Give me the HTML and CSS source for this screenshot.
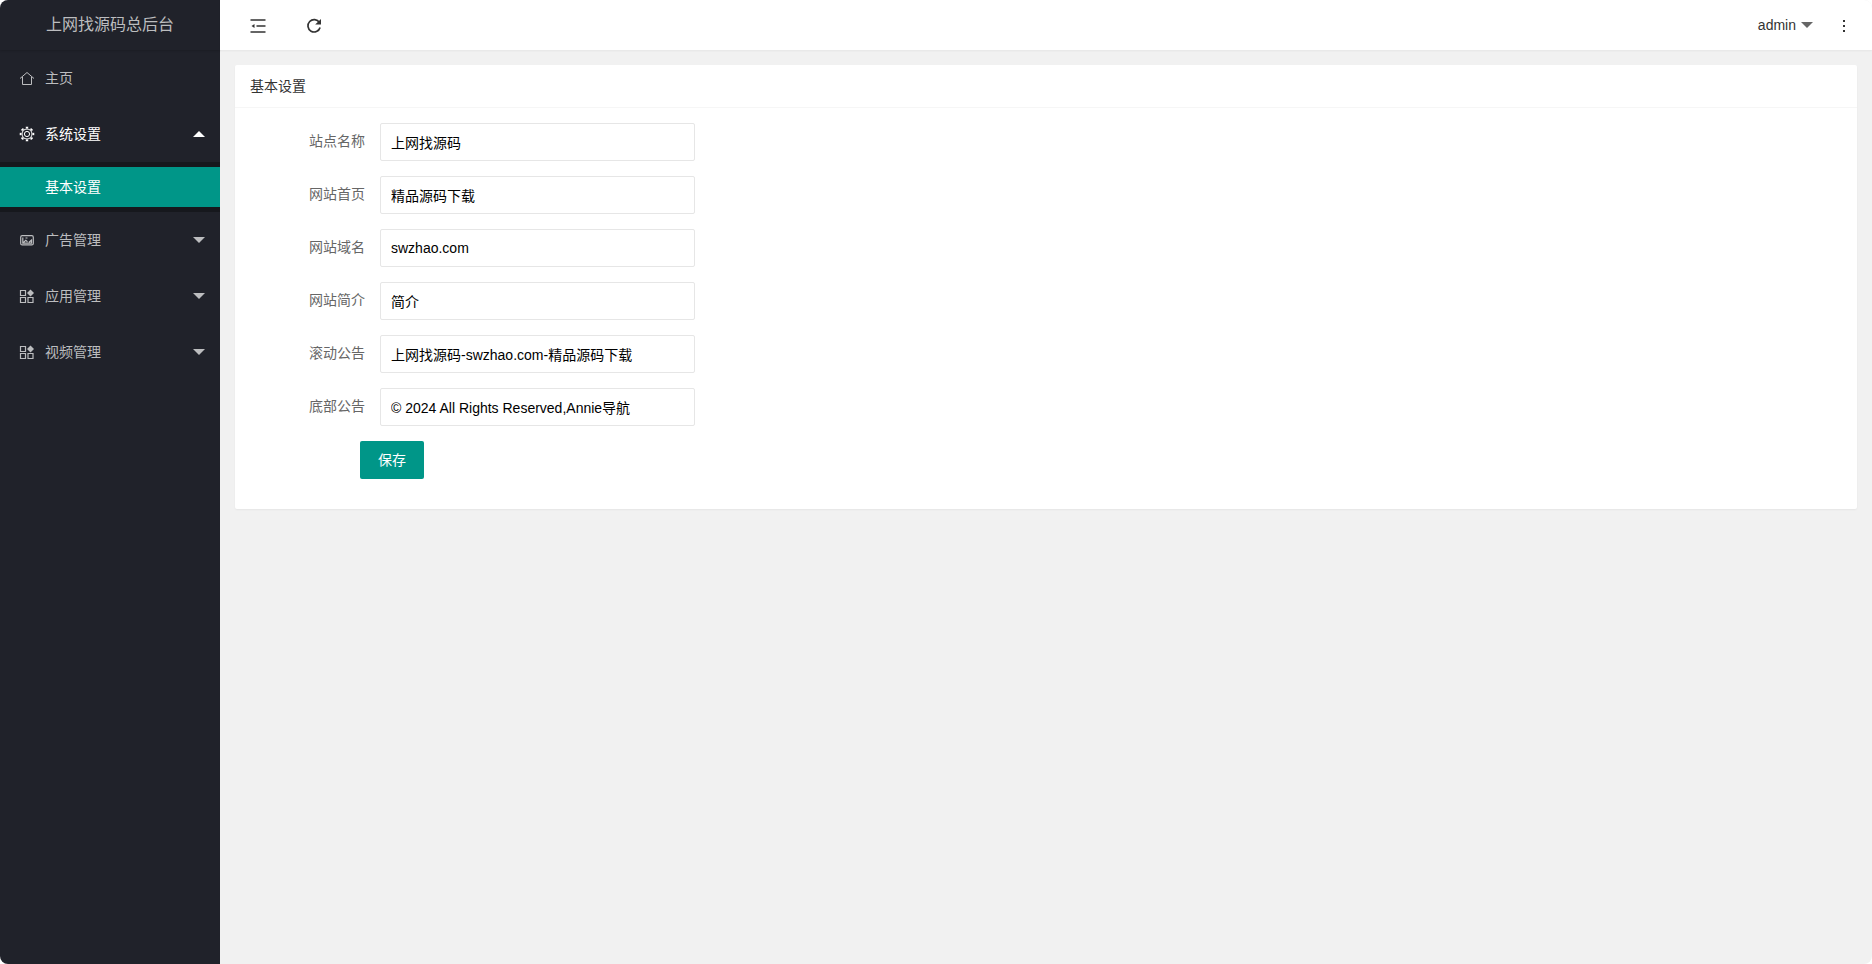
FILE: index.html
```
<!DOCTYPE html>
<html lang="zh-CN">
<head>
<meta charset="utf-8">
<title>上网找源码总后台</title>
<link rel="stylesheet" href="styles.css">
</head>
<body>
<div class="app">
  <aside class="sidebar">
    <div class="brand">上网找源码总后台</div>
    <nav class="menu">
      <a class="menu-item" href="#">
        <svg class="menu-icon" viewBox="0 0 16 16"><path d="M1 8.500 8 2.500l7 6M3.500 7v7.500h9V7"/></svg>
        <span class="menu-text">主页</span>
      </a>
      <a class="menu-item is-open" href="#">
        <svg class="menu-icon" viewBox="0 0 16 16"><circle cx="8" cy="8" r="5"/><circle cx="8" cy="8" r="2.600"/><circle cx="8" cy="8" r="6.400" stroke-width="1.800" pathLength="80" stroke-dasharray="5 5" stroke-dashoffset="2.500"/></svg>
        <span class="menu-text">系统设置</span>
        <span class="caret caret-up"></span>
      </a>
      <div class="submenu">
        <a class="submenu-item" href="#">基本设置</a>
      </div>
      <a class="menu-item" href="#">
        <svg class="menu-icon icon-bold" viewBox="0 0 16 16"><rect x="1.700" y="3.700" width="12.600" height="9.200" rx="1.500"/><path d="M3.800 5.500v5.600h8.700V8L10 10.300M4.500 10.500l2.300-2.300 1.700 1.500M6.500 6h2"/></svg>
        <span class="menu-text">广告管理</span>
        <span class="caret"></span>
      </a>
      <a class="menu-item" href="#">
        <svg class="menu-icon icon-bold" viewBox="0 0 16 16"><path d="M1.500 2.500h5v5h-5zM1.500 9.500h5v5h-5zM9 9.500h5v5H9z"/><path class="solid" d="M11.500 1.500 15 5l-3.500 3.500L8 5z"/></svg>
        <span class="menu-text">应用管理</span>
        <span class="caret"></span>
      </a>
      <a class="menu-item" href="#">
        <svg class="menu-icon icon-bold" viewBox="0 0 16 16"><path d="M1.500 2.500h5v5h-5zM1.500 9.500h5v5h-5zM9 9.500h5v5H9z"/><path class="solid" d="M11.500 1.500 15 5l-3.500 3.500L8 5z"/></svg>
        <span class="menu-text">视频管理</span>
        <span class="caret"></span>
      </a>
    </nav>
  </aside>
  <div class="page">
    <header class="topbar">
      <button class="tool" type="button" aria-label="收起菜单">
        <svg class="tool-icon" viewBox="0 0 16 16"><path d="M.5 2h15M6.500 8h9M.5 14h15"/><path class="solid" d="M1.500 8 4.500 6v4z"/></svg>
      </button>
      <button class="tool" type="button" aria-label="刷新">
        <svg class="tool-icon" viewBox="0 0 16 16"><path d="M13.400 4.500A6.200 6.200 0 1 0 14.100 9.500"/><path class="solid" d="M15 1v5.500H9.200z"/></svg>
      </button>
      <div class="topbar-end">
        <button class="user" type="button">admin<span class="caret"></span></button>
        <button class="more" type="button" aria-label="更多">
          <svg class="tool-icon" viewBox="0 0 16 16"><path class="solid" d="M7 2h2v2H7zM7 7h2v2H7zM7 12h2v2H7z"/></svg>
        </button>
      </div>
    </header>
    <main class="content">
      <section class="card">
        <h1 class="card-header">基本设置</h1>
        <form class="form">
          <div class="field"><label for="name">站点名称</label><input id="name" type="text" value="上网找源码"></div>
          <div class="field"><label for="home">网站首页</label><input id="home" type="text" value="精品源码下载"></div>
          <div class="field"><label for="domain">网站域名</label><input id="domain" type="text" value="swzhao.com"></div>
          <div class="field"><label for="intro">网站简介</label><input id="intro" type="text" value="简介"></div>
          <div class="field"><label for="notice">滚动公告</label><input id="notice" type="text" value="上网找源码-swzhao.com-精品源码下载"></div>
          <div class="field"><label for="footer">底部公告</label><input id="footer" type="text" value="© 2024 All Rights Reserved,Annie导航"></div>
          <div class="actions"><button class="save" type="button">保存</button></div>
        </form>
      </section>
    </main>
  </div>
</div>
</body>
</html>
```
FILE: styles.css
```
* {
  box-sizing: border-box;
}

body {
  margin: 0;
  background: #fff;
  color: #333;
  font: 14px/24px "Liberation Sans", "Noto Sans CJK SC", sans-serif;
}

button,
input {
  font: inherit;
}

button {
  padding: 0;
  border: 0;
  background: none;
  color: inherit;
  cursor: pointer;
}

a {
  color: inherit;
  text-decoration: none;
}

svg {
  fill: none;
  stroke: currentColor;
}

.solid {
  fill: currentColor;
  stroke: none;
}

.app {
  display: flex;
  min-height: 100vh;
  border-radius: 8px;
  background: #f1f1f1;
  overflow: hidden;
}

.sidebar {
  flex: 0 0 220px;
  background: #20222a;
  color: #bcbdbf;
}

.brand {
  height: 50px;
  box-shadow: 0 1px 2px rgba(0, 0, 0, 0.15);
  font-size: 16px;
  line-height: 50px;
  text-align: center;
}

.menu-item {
  display: flex;
  align-items: center;
  height: 56px;
  padding: 0 15px 0 19px;
}

.menu-icon {
  width: 16px;
  height: 16px;
  margin-right: 10px;
}

.icon-bold {
  stroke-width: 1.2;
}

.menu-text {
  flex: 1;
}

.is-open {
  color: #fff;
}

.caret {
  width: 12px;
  border: 6px solid transparent;
  border-top-color: currentColor;
  border-bottom: 0;
}

.caret-up {
  border-top: 0;
  border-bottom: 6px solid currentColor;
}

.submenu {
  padding: 5px 0;
  background: #16181d;
}

.submenu-item {
  display: block;
  padding-left: 45px;
  background: #009688;
  color: #fff;
  line-height: 40px;
}

.page {
  flex: 1;
  min-width: 0;
}

.topbar {
  display: flex;
  align-items: center;
  height: 50px;
  padding: 0 20px 0 10px;
  background: #fff;
  box-shadow: 0 1px 2px rgba(0, 0, 0, 0.05);
}

.tool {
  width: 56px;
  height: 50px;
}

.tool-icon {
  display: block;
  width: 16px;
  height: 16px;
  margin: 2px auto 0;
  stroke-width: 1.7;
}

.topbar-end {
  display: flex;
  align-items: center;
  gap: 23px;
  margin-left: auto;
}

.user {
  display: flex;
  align-items: center;
  gap: 5px;
}

.user .caret {
  color: #666;
}

.content {
  padding: 15px;
}

.card {
  border-radius: 2px;
  background: #fff;
  box-shadow: 0 1px 2px rgba(0, 0, 0, 0.05);
}

.card-header {
  margin: 0;
  padding: 0 15px;
  border-bottom: 1px solid #f6f6f6;
  font-size: 14px;
  font-weight: 400;
  line-height: 42px;
}

.form {
  display: grid;
  gap: 15px;
  padding: 15px 15px 30px;
}

.field {
  display: flex;
}

.field label {
  width: 130px;
  padding-right: 15px;
  color: #666;
  line-height: 36px;
  text-align: right;
}

.field input {
  width: 315px;
  height: 38px;
  padding: 0 10px;
  border: 1px solid #e6e6e6;
  border-radius: 2px;
  background: #fff;
  color: #000;
}

.actions {
  padding-left: 110px;
}

.save {
  display: block;
  height: 38px;
  padding: 0 18px;
  border-radius: 2px;
  background: #009688;
  color: #fff;
}
```
